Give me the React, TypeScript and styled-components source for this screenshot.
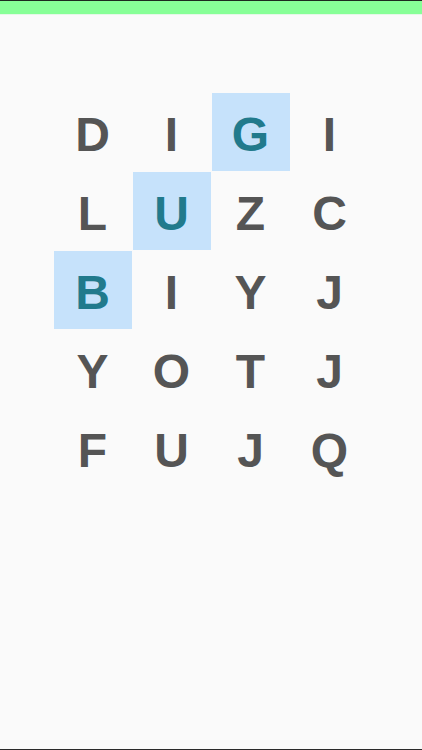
import styled, { createGlobalStyle } from "styled-components";

const board = ["DIGI", "LUZC", "BIYJ", "YOTJ", "FUJQ"];
const picked = ["0-2", "1-1", "2-0"];

function App() {
  return (
    <>
      <GlobalStyle />
      <Screen>
        <StatusBar />
        <Grid>
          {board.map((row, r) =>
            row.split("").map((ch, c) => (
              <Cell key={`${r}-${c}`} $selected={picked.includes(`${r}-${c}`)}>
                {ch}
              </Cell>
            ))
          )}
        </Grid>
      </Screen>
    </>
  );
}

const GlobalStyle = createGlobalStyle`
  html, body {
    margin: 0;
    padding: 0;
    background: #fafafa;
  }
`;

const Screen = styled.div`
  display: flex;
  flex-direction: column;
  align-items: center;
  height: 750px;
  box-sizing: border-box;
  border-top: 1px solid #1d2a1f;
  border-bottom: 1px solid #2a2a2a;
  background: #fafafa;
  font-family: "Liberation Sans", Arial, sans-serif;
`;

const StatusBar = styled.div`
  align-self: stretch;
  height: 13px;
  background: #87ff97;
  border-bottom: 1px solid #e6f7e8;
`;

const Grid = styled.div`
  display: grid;
  grid-template-columns: repeat(4, 78px);
  grid-auto-rows: 78px;
  gap: 1px;
  margin-top: 78px;
`;

const Cell = styled.div<{ $selected: boolean }>`
  display: flex;
  align-items: center;
  justify-content: center;
  padding-top: 4px;
  box-sizing: border-box;
  font-size: 48px;
  font-weight: bold;
  color: ${(p) => (p.$selected ? "#217a8c" : "#555555")};
  background: ${(p) => (p.$selected ? "#c6e2fb" : "transparent")};
`;

export default App;
